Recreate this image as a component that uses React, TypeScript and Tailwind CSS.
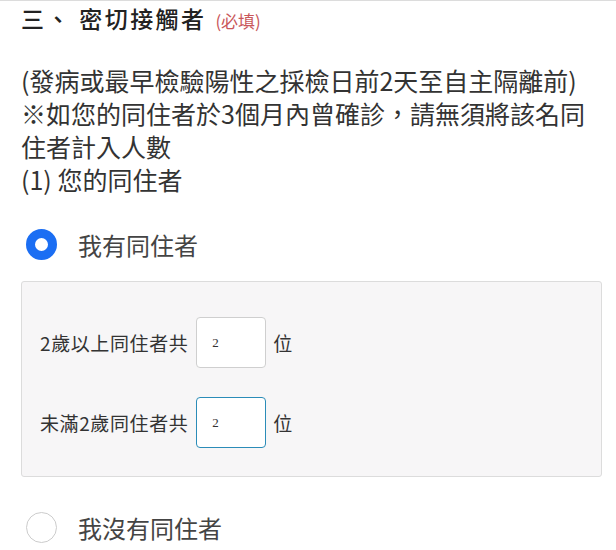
import React from "react";

const font = { fontFamily: '"Noto Sans CJK TC", "Noto Sans", sans-serif' };

const CountRow = ({ label, value, focused }: { label: string; value: string; focused?: boolean }) => (
  <div className="flex items-center">
    <span className="text-[19px] leading-none tracking-[0.6px] text-[#333]">{label}</span>
    <input
      readOnly
      value={value}
      className={`ml-[8px] w-[70px] h-[51px] rounded-[4px] bg-white pl-[15px] text-[13px] text-[#333] outline-none font-['Liberation_Serif',serif] border ${
        focused ? "border-[#2b8cb8]" : "border-[#cfcfcf]"
      }`}
    />
    <span className="ml-[7px] text-[19px] leading-none text-[#333]">位</span>
  </div>
);

export default function App() {
  return (
    <div className="w-[616px] h-[550px] overflow-hidden bg-white border-t border-[#dcdcdc]" style={font}>
      <div className="pl-[21px] pr-[14px]">
        {/* 標題 */}
        <h2 className="mt-[1px] flex items-baseline h-[32px] leading-[32px]">
          <span className="text-[23px] font-medium tracking-[2.4px] text-[#222]">三、 密切接觸者</span>
          <span className="ml-[9px] text-[17px] text-[#c9575a]">(必填)</span>
        </h2>

        {/* 說明 */}
        <p className="mt-[30px] text-[25px] leading-[33px] text-[#333]">
          (發病或最早檢驗陽性之採檢日前2天至自主隔離前)
          <br />
          ※如您的同住者於3個月內曾確診，請無須將該名同
          <br />
          住者計入人數
          <br />
          (1) 您的同住者
        </p>

        {/* 有同住者 */}
        <label className="mt-[33px] flex items-center">
          <span className="ml-[5px] w-[31px] h-[31px] rounded-full border-[9px] border-[#1b6ef3] bg-white" />
          <span className="ml-[21px] text-[24px] leading-none text-[#444]">我有同住者</span>
        </label>

        <div className="mt-[21px] h-[196px] rounded-[3px] border border-[#dcdcdc] bg-[#f7f6f7] pl-[18px] pt-[35px]">
          <div className="flex flex-col gap-[29px]">
            <CountRow label="2歲以上同住者共" value="2" />
            <CountRow label="未滿2歲同住者共" value="2" focused />
          </div>
        </div>

        {/* 沒有同住者 */}
        <label className="mt-[35px] flex items-center">
          <span className="ml-[5px] w-[31px] h-[31px] rounded-full border border-[#cccccc] bg-white" />
          <span className="ml-[21px] text-[24px] leading-none text-[#444]">我沒有同住者</span>
        </label>
      </div>
    </div>
  );
}
